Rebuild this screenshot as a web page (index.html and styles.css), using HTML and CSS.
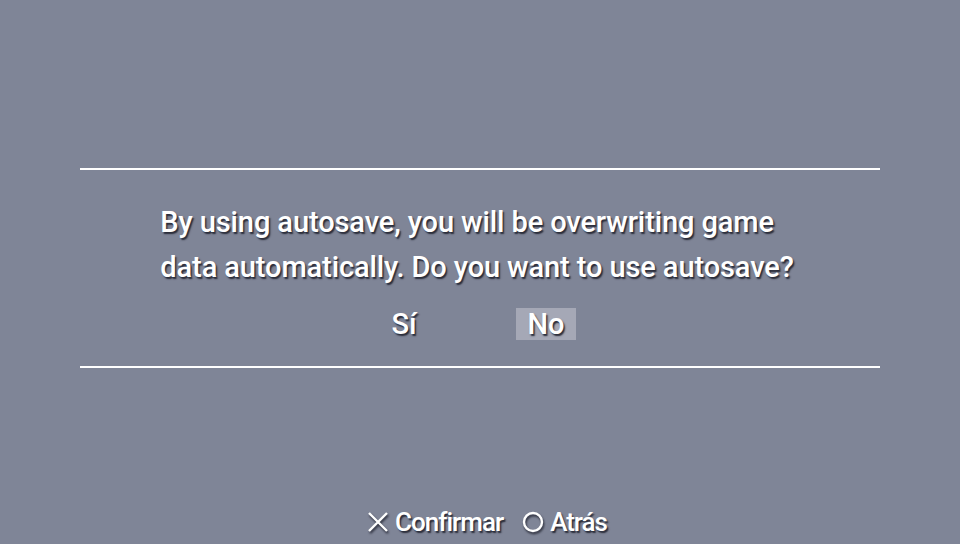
FILE: index.html
```html
<!DOCTYPE html>
<html>
<head>
<meta charset="utf-8">
<link rel="stylesheet" href="styles.css">
</head>
<body>
<div class="screen">
  <div class="dialog">
    <div class="message">
      <span class="line">By using autosave, you will be overwriting game</span>
      <span class="line">data automatically. Do you want to use autosave?</span>
    </div>
    <div class="choices">
      <div class="choice">Sí</div>
      <div class="choice selected">No</div>
    </div>
  </div>
  <div class="footer">
    <span class="hint"><span class="glyph">
      <svg width="22" height="22" viewBox="0 0 22 22"><path d="M2 2 L20 20 M20 2 L2 20" stroke="#fff" stroke-width="2.4" fill="none"/></svg>
    </span><span class="label">Confirmar</span></span>
    <span class="hint"><span class="glyph">
      <svg width="22" height="22" viewBox="0 0 22 22"><circle cx="11" cy="11" r="9" stroke="#fff" stroke-width="2.4" fill="none"/></svg>
    </span><span class="label">Atrás</span></span>
  </div>
</div>
</body>
</html>
```
FILE: styles.css
```css
html, body {
  margin: 0;
  padding: 0;
}
body {
  background: #7f8597;
  font-family: "Roboto", "Liberation Sans", sans-serif;
  color: #fff;
}
.screen {
  width: 960px;
  height: 544px;
  display: flex;
  flex-direction: column;
  align-items: center;
  padding-top: 168px;
  box-sizing: border-box;
}
.dialog {
  width: 800px;
  height: 200px;
  border-top: 2px solid #fff;
  border-bottom: 2px solid #fff;
  box-sizing: border-box;
  display: flex;
  flex-direction: column;
  align-items: center;
}
.message {
  margin-top: 30px;
  margin-right: 6px;
  display: flex;
  flex-direction: column;
  font-size: 29px;
  font-weight: 500;
  line-height: 45px;
  letter-spacing: -0.1px;
  text-shadow: 1.5px 2px 1.5px rgba(35, 37, 50, 0.95);
}
.line {
  white-space: nowrap;
}
.choices {
  display: flex;
  gap: 82px;
  margin-top: 18px;
  margin-right: 10px;
}
.choice {
  width: 60px;
  height: 32px;
  line-height: 33px;
  text-align: center;
  font-size: 29px;
  font-weight: 500;
  text-shadow: 1.5px 2px 1.5px rgba(35, 37, 50, 0.95);
}
.choice.selected {
  background: #a5a8b6;
}
.footer {
  margin-top: auto;
  margin-left: 14px;
  height: 45px;
  display: flex;
  gap: 19px;
  align-items: center;
  font-size: 26px;
  font-weight: 500;
  text-shadow: 1.5px 2px 1.5px rgba(35, 37, 50, 0.95);
}
.hint {
  display: flex;
  align-items: center;
  gap: 6px;
}
.label {
  display: inline-block;
  letter-spacing: -1px;
}
.glyph {
  display: flex;
  filter: drop-shadow(1px 2px 1px rgba(35, 37, 50, 0.95));
}
```
